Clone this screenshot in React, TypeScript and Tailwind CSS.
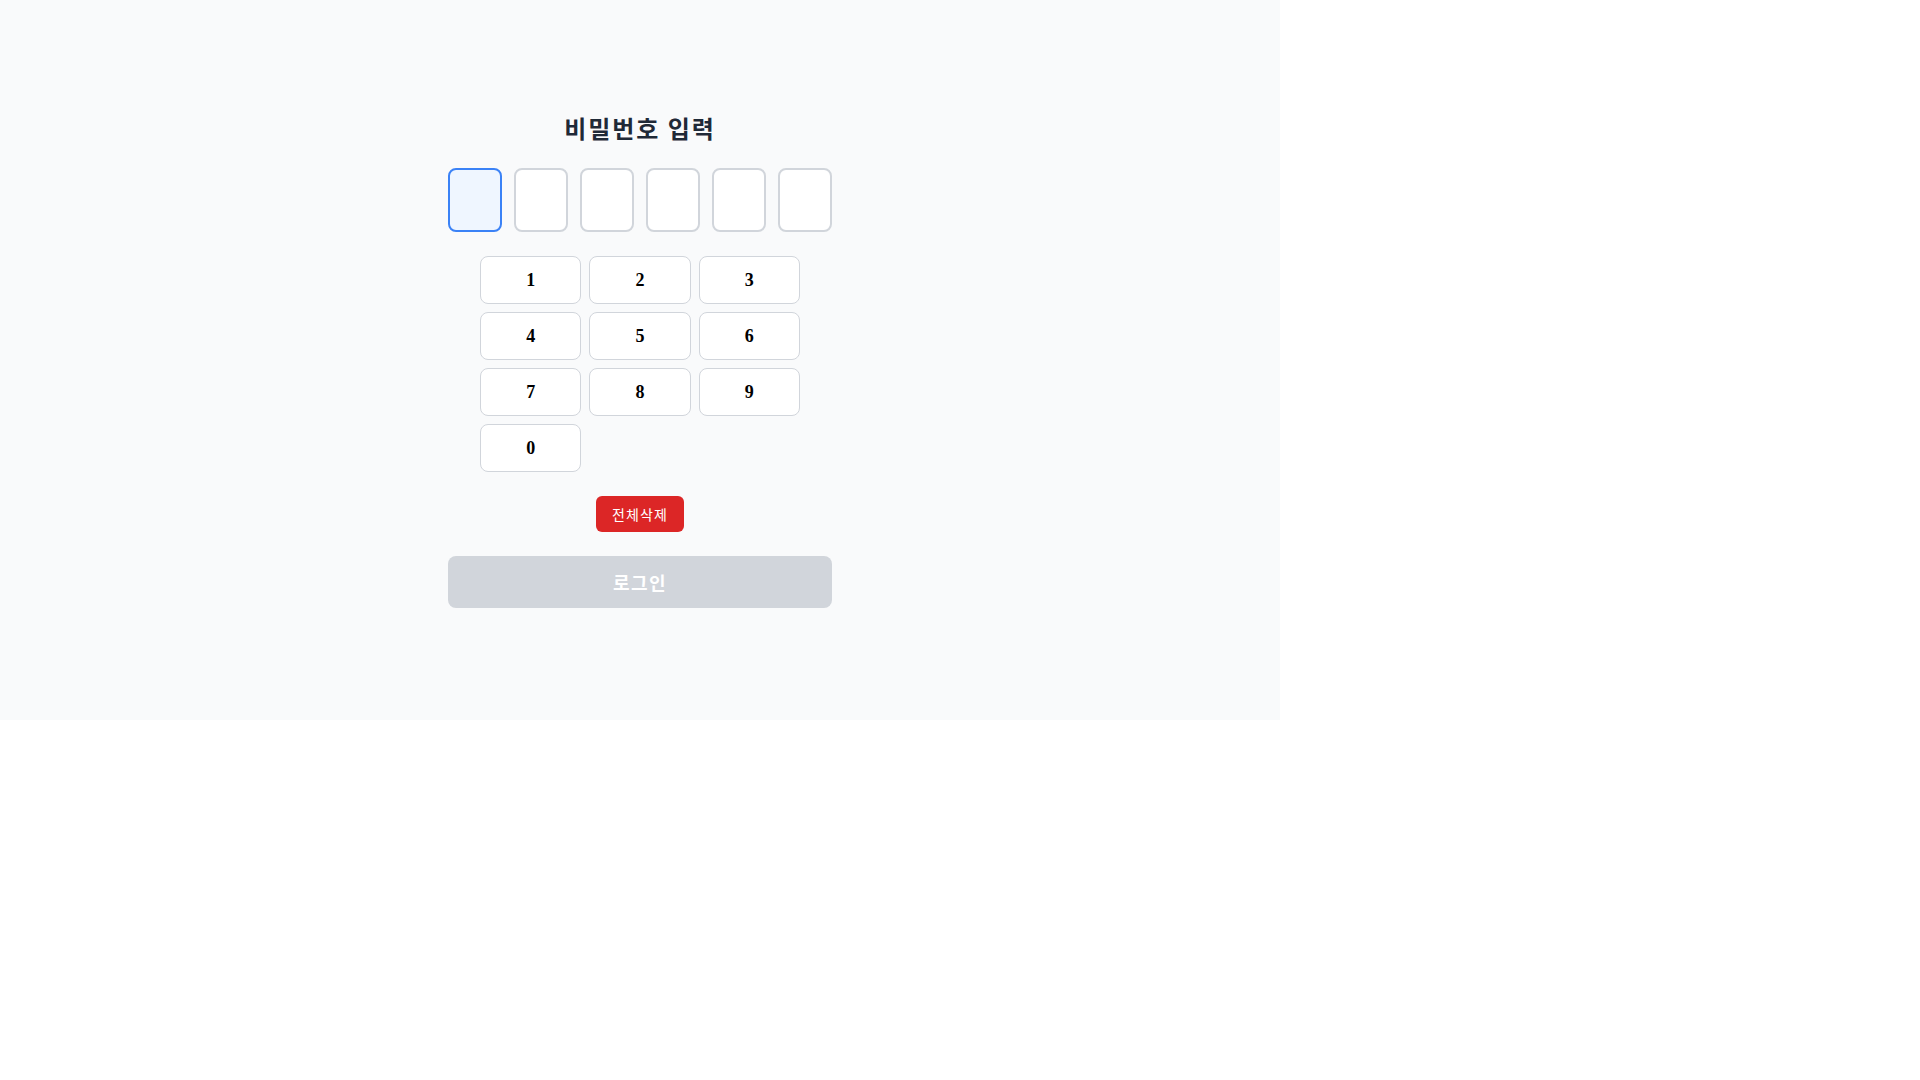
import { useState } from "react";

const KEYS = ["1", "2", "3", "4", "5", "6", "7", "8", "9", "0"];
const LENGTH = 6;

export default function App() {
  const [pin, setPin] = useState("");

  const press = (k: string) => {
    if (pin.length < LENGTH) setPin(pin + k);
  };

  return (
    <div className="w-[1280px] h-[720px] bg-[#f9fafb] flex items-center justify-center font-['Liberation_Serif','Noto_Sans_CJK_KR',serif]">
      <div className="w-96 flex flex-col items-center">
        {/* Title */}
        <h1 className="text-2xl font-bold text-[#1f2937] mb-6 tracking-[0.08em] font-['Noto_Sans_CJK_KR',sans-serif]">
          비밀번호 입력
        </h1>

        {/* PIN boxes */}
        <div className="w-full flex gap-3">
          {Array.from({ length: LENGTH }).map((_, i) => {
            const active = i === pin.length;
            return (
              <div
                key={i}
                className={
                  active
                    ? "flex-1 h-16 rounded-lg border-2 border-[#3b82f6] bg-[#eff6ff] flex items-center justify-center text-2xl"
                    : "flex-1 h-16 rounded-lg border-2 border-[#d1d5db] bg-white flex items-center justify-center text-2xl"
                }
              >
                {pin[i] ? "•" : ""}
              </div>
            );
          })}
        </div>

        {/* Keypad */}
        <div className="w-80 grid grid-cols-3 gap-2 mt-6">
          {KEYS.map((k) => (
            <button
              key={k}
              onClick={() => press(k)}
              className="h-12 rounded-lg border border-[#d1d5db] bg-white text-lg font-bold text-black"
            >
              {k}
            </button>
          ))}
        </div>

        <button
          onClick={() => setPin("")}
          className="mt-6 px-4 py-2 rounded-md bg-[#dc2626] text-white text-sm leading-5 tracking-[0.08em] font-['Noto_Sans_CJK_KR',sans-serif]"
        >
          전체삭제
        </button>

        <button
          disabled={pin.length < LENGTH}
          className="mt-6 w-full py-3 rounded-lg bg-[#d1d5db] text-white text-lg font-bold tracking-[0.08em] font-['Noto_Sans_CJK_KR',sans-serif]"
        >
          로그인
        </button>
      </div>
    </div>
  );
}
